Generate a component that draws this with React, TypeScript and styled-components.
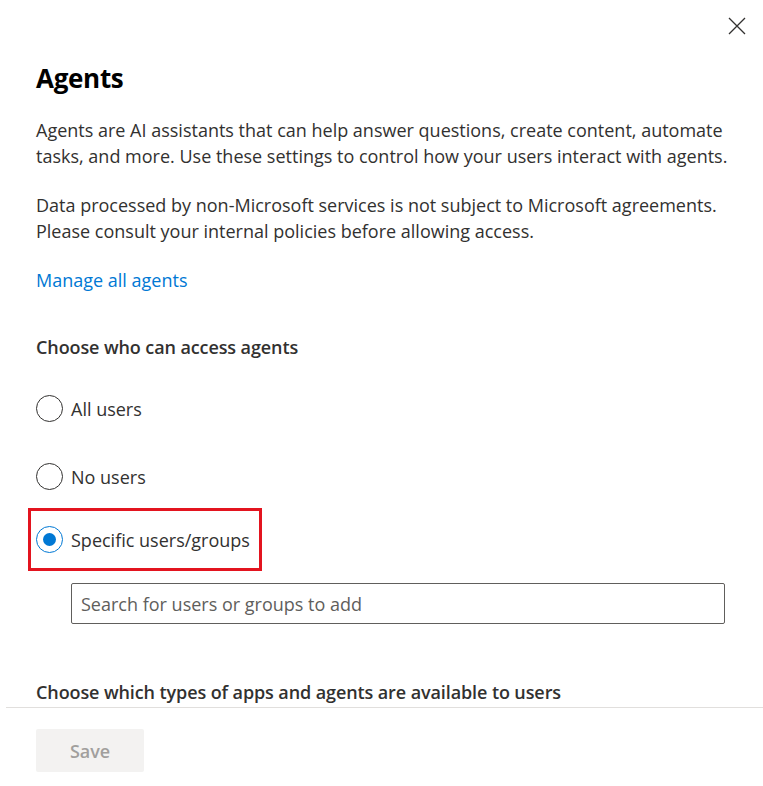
import React from "react";
import styled, { createGlobalStyle } from "styled-components";

const Global = createGlobalStyle`
  html, body { margin: 0; padding: 0; background: #ffffff; }
  body { font-family: "Open Sans", "Noto Sans", sans-serif; color: #323130; }
  * { box-sizing: border-box; }
`;

const Panel = styled.div`
  width: 763px;
  height: 786px;
  display: flex;
  flex-direction: column;
  background: #fff;
  overflow: hidden;
`;

const Header = styled.div`
  display: flex;
  justify-content: flex-end;
  padding: 14px 14px 0 0;
  height: 38px;
`;

const CloseButton = styled.button`
  width: 24px;
  height: 24px;
  border: none;
  background: transparent;
  padding: 0;
  display: flex;
  align-items: center;
  justify-content: center;
  cursor: pointer;
`;

const Body = styled.div`
  flex: 1;
  overflow: hidden;
  padding: 24px 36px 0 36px;
  display: flex;
  flex-direction: column;
`;

const Title = styled.h1`
  margin: 0;
  font-size: 26px;
  font-weight: 700;
  color: #000;
  line-height: 32px;
  letter-spacing: -0.3px;
`;

const Paragraph = styled.p<{ $top: number }>`
  margin: ${(p) => p.$top}px 0 0 0;
  font-size: 18px;
  line-height: 26px;
  color: #323130;
  white-space: nowrap;
`;

const Link = styled.a`
  margin-top: 23px;
  font-size: 18px;
  line-height: 26px;
  color: #0078d4;
  text-decoration: none;
  align-self: flex-start;
`;

const SectionLabel = styled.div<{ $top: number }>`
  margin-top: ${(p) => p.$top}px;
  font-size: 18px;
  line-height: 26px;
  font-weight: 600;
  color: #323130;
  letter-spacing: -0.1px;
`;

const RadioGroup = styled.div`
  display: flex;
  flex-direction: column;
  margin-top: 35px;
`;

const RadioRow = styled.label<{ $highlight?: boolean; $top: number }>`
  display: flex;
  align-items: center;
  gap: 8px;
  margin-top: ${(p) => p.$top}px;
  font-size: 18px;
  line-height: 26px;
  color: #323130;
  cursor: pointer;
  align-self: flex-start;
  ${(p) =>
    p.$highlight
      ? `
    margin-left: -8px;
    padding: 15px 9px 15px 5px;
    border: 3px solid #e3141f;
  `
      : ""}
`;

const RadioCircle = styled.span<{ $checked?: boolean }>`
  width: 27px;
  height: 27px;
  border-radius: 50%;
  border: 1px solid ${(p) => (p.$checked ? "#0078d4" : "#323130")};
  display: flex;
  align-items: center;
  justify-content: center;
  flex: none;
  &::after {
    content: "";
    width: 13px;
    height: 13px;
    border-radius: 50%;
    background: ${(p) => (p.$checked ? "#0078d4" : "transparent")};
  }
`;

const SearchBox = styled.input`
  margin: 12px 2px 0 35px;
  height: 41px;
  border: 1px solid #605e5c;
  border-radius: 2px;
  padding: 0 9px;
  font-family: "Open Sans", "Noto Sans", sans-serif;
  font-size: 18px;
  color: #323130;
  outline: none;
  &::placeholder { color: #605e5c; }
`;

const Footer = styled.div`
  margin-left: 6px;
  border-top: 1px solid #e1dfdd;
  padding: 21px 30px 14px;
  flex: none;
`;

const SaveButton = styled.button`
  width: 108px;
  height: 43px;
  border: none;
  border-radius: 2px;
  background: #f3f2f1;
  color: #a19f9d;
  font-family: "Open Sans", "Noto Sans", sans-serif;
  font-size: 18px;
  font-weight: 600;
  letter-spacing: -0.1px;
`;

export default function App() {
  return (
    <>
      <Global />
      <Panel>
        <Header>
          <CloseButton aria-label="Close">
            <svg width="18" height="18" viewBox="0 0 18 18">
              <path d="M1 1 L17 17 M17 1 L1 17" stroke="#323130" strokeWidth="1.3" fill="none" />
            </svg>
          </CloseButton>
        </Header>
        <Body>
          <Title>Agents</Title>
          <Paragraph $top={23}>
            Agents are AI assistants that can help answer questions, create content, automate
            <br />
            tasks, and more. Use these settings to control how your users interact with agents.
          </Paragraph>
          <Paragraph $top={23}>
            Data processed by non-Microsoft services is not subject to Microsoft agreements.
            <br />
            Please consult your internal policies before allowing access.
          </Paragraph>
          <Link href="#">Manage all agents</Link>
          <SectionLabel $top={41}>Choose who can access agents</SectionLabel>
          <RadioGroup>
            <RadioRow $top={0}>
              <RadioCircle />
              All users
            </RadioRow>
            <RadioRow $top={41}>
              <RadioCircle />
              No users
            </RadioRow>
            <RadioRow $top={18} $highlight>
              <RadioCircle $checked />
              Specific users/groups
            </RadioRow>
          </RadioGroup>
          <SearchBox placeholder="Search for users or groups to add" />
          <SectionLabel $top={55}>Choose which types of apps and agents are available to users</SectionLabel>
        </Body>
        <Footer>
          <SaveButton disabled>Save</SaveButton>
        </Footer>
      </Panel>
    </>
  );
}
